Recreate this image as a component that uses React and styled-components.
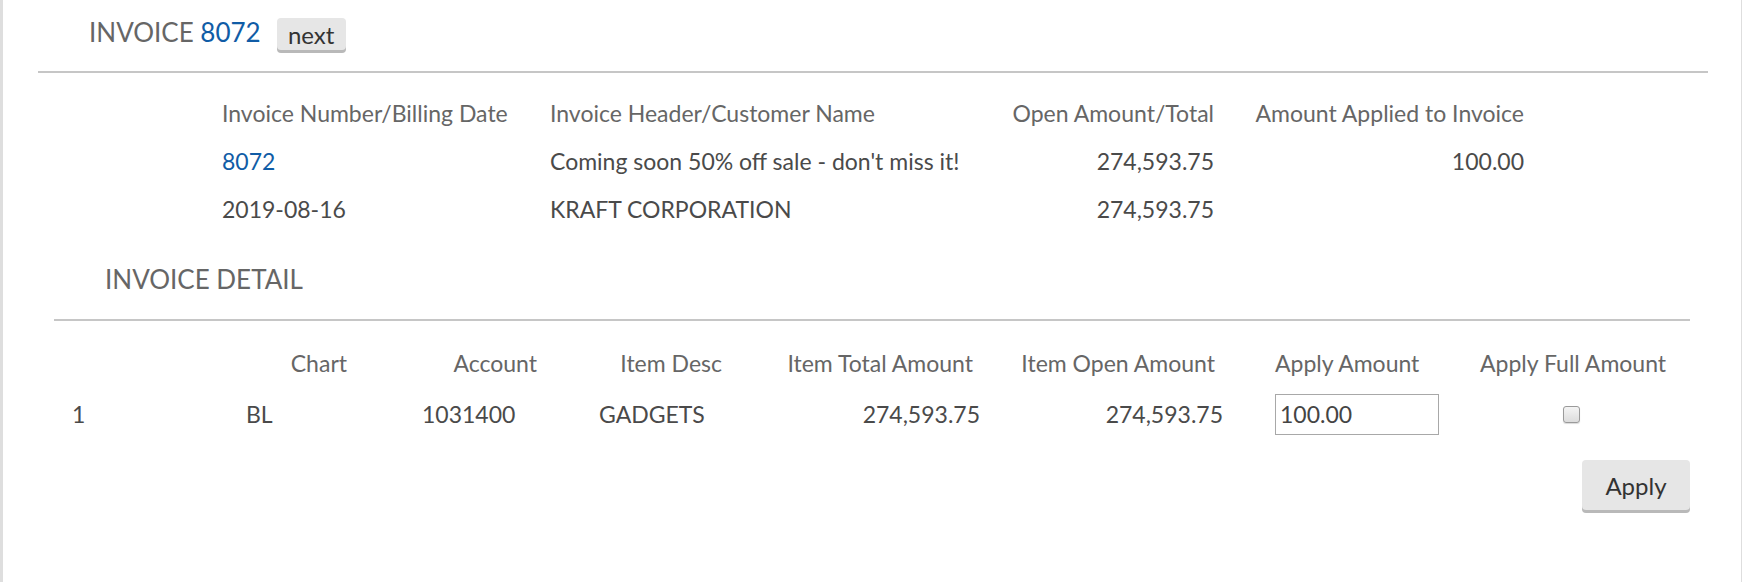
import React, { useState } from 'react';
import styled, { createGlobalStyle } from 'styled-components';

const GlobalStyle = createGlobalStyle`
  html, body {
    margin: 0;
    padding: 0;
    background: #fff;
  }
  body {
    font-family: Lato, "Open Sans", "Liberation Sans", sans-serif;
    color: #555;
  }
`;

const Page = styled.div`
  box-sizing: border-box;
  width: 1742px;
  height: 582px;
  border-left: 3px solid #dedede;
  border-right: 1px solid #dedede;
  overflow: hidden;
`;

const TitleRow = styled.div`
  display: flex;
  align-items: flex-start;
  gap: 16px;
  height: 71px;
  padding: 17px 0 0 86px;
  box-sizing: border-box;
`;

const Title = styled.h1`
  margin: 0;
  font-size: 26px;
  font-weight: 400;
  line-height: 1.2;
  color: #666;
`;

const Link = styled.a`
  color: #105ca6;
  text-decoration: none;
`;

const GrayButton = styled.button`
  font-family: inherit;
  font-size: 24px;
  color: #333;
  background: #e6e6e6;
  border: none;
  border-radius: 4px;
  box-shadow: 0 3px 0 #b9b9b9;
  padding: 0;
  width: ${(p) => p.$w}px;
  height: ${(p) => p.$h}px;
  margin-top: ${(p) => p.$top || 0}px;
  cursor: pointer;
`;

const Rule = styled.hr`
  border: none;
  height: 2px;
  background: #c6c6c6;
  margin: 0 ${(p) => p.$right}px 0 ${(p) => p.$left}px;
`;

const Summary = styled.div`
  display: grid;
  grid-template-columns: 328px 450px 214px 310px;
  grid-auto-rows: 48px;
  margin: 16px 0 0 219px;
  font-size: 23px;
`;

const Cell = styled.div`
  display: flex;
  align-items: center;
  justify-content: ${(p) => (p.$right ? 'flex-end' : 'flex-start')};
  padding-left: ${(p) => p.$pl || 0}px;
  padding-right: ${(p) => p.$pr || 0}px;
  color: ${(p) => (p.$head ? '#666' : '#4a4a4a')};
  white-space: nowrap;
`;

const SectionTitle = styled.h2`
  margin: 31px 0 24px 102px;
  font-size: 26px;
  font-weight: 400;
  line-height: 1.2;
  color: #666;
`;

const Detail = styled.div`
  margin: 0 51px 0 51px;
`;

const DetailGrid = styled.div`
  display: grid;
  grid-template-columns: 146px 180px 180px 180px 250px 250px 220px 1fr;
  grid-template-rows: 48px 54px;
  margin-top: 18px;
  font-size: 23px;
`;

const AmountInput = styled.input`
  box-sizing: border-box;
  width: 164px;
  height: 41px;
  border: 1px solid #a8a8a8;
  padding: 0 4px;
  font-family: inherit;
  font-size: 23px;
  color: #444;
  outline: none;
`;

const Check = styled.input`
  appearance: none;
  box-sizing: border-box;
  width: 17px;
  height: 17px;
  margin: 0;
  border: 1px solid #9a9a9a;
  border-radius: 3px;
  background: linear-gradient(#f4f4f4, #dcdcdc);
  box-shadow: 0 1px 1px rgba(0, 0, 0, 0.15);
  &:checked {
    background: #1e70c2;
  }
`;

const Actions = styled.div`
  display: flex;
  justify-content: flex-end;
  margin-top: 19px;
`;

const summaryRows = [
  ['8072', 'Coming soon 50% off sale - don\'t miss it!', '274,593.75', '100.00'],
  ['2019-08-16', 'KRAFT CORPORATION', '274,593.75', ''],
];

export default function App() {
  const [amount, setAmount] = useState('100.00');
  const [full, setFull] = useState(false);

  return (
    <>
      <GlobalStyle />
      <Page>
        <TitleRow>
          <Title>
            INVOICE <Link href="#">8072</Link>
          </Title>
          <GrayButton $w={69} $h={32} $top={1}>next</GrayButton>
        </TitleRow>
        <Rule $left={35} $right={33} />

        <Summary>
          <Cell $head>Invoice Number/Billing Date</Cell>
          <Cell $head>Invoice Header/Customer Name</Cell>
          <Cell $head $right>Open Amount/Total</Cell>
          <Cell $head $right>Amount Applied to Invoice</Cell>
          {summaryRows.map((r, i) => (
            <React.Fragment key={i}>
              <Cell>{i === 0 ? <Link href="#">{r[0]}</Link> : r[0]}</Cell>
              <Cell>{r[1]}</Cell>
              <Cell $right>{r[2]}</Cell>
              <Cell $right>{r[3]}</Cell>
            </React.Fragment>
          ))}
        </Summary>

        <SectionTitle>INVOICE DETAIL</SectionTitle>
        <Detail>
          <Rule $left={0} $right={0} />
          <DetailGrid>
            <Cell $head />
            <Cell $head $right $pr={33}>Chart</Cell>
            <Cell $head $right $pr={23}>Account</Cell>
            <Cell $head $right $pr={18}>Item Desc</Cell>
            <Cell $head $right $pr={17}>Item Total Amount</Cell>
            <Cell $head $right $pr={25}>Item Open Amount</Cell>
            <Cell $head $pl={35}>Apply Amount</Cell>
            <Cell $head $pl={20}>Apply Full Amount</Cell>

            <Cell $pl={18}>1</Cell>
            <Cell $pl={46}>BL</Cell>
            <Cell $pl={42}>1031400</Cell>
            <Cell $pl={39}>GADGETS</Cell>
            <Cell $right $pr={10}>274,593.75</Cell>
            <Cell $right $pr={17}>274,593.75</Cell>
            <Cell $pl={35}>
              <AmountInput value={amount} onChange={(e) => setAmount(e.target.value)} />
            </Cell>
            <Cell $pl={103}>
              <Check type="checkbox" checked={full} onChange={(e) => setFull(e.target.checked)} />
            </Cell>
          </DetailGrid>
          <Actions>
            <GrayButton $w={108} $h={50}>Apply</GrayButton>
          </Actions>
        </Detail>
      </Page>
    </>
  );
}
